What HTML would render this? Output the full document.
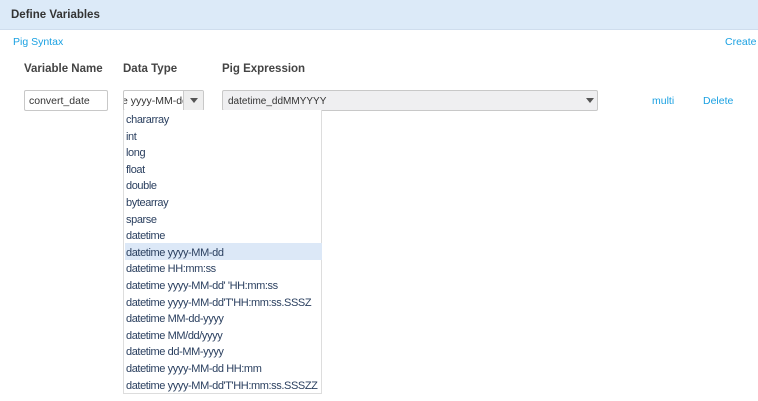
<!DOCTYPE html>
<html><head><style>
body{margin:0;width:758px;height:401px;background:#fff;font-family:"Liberation Sans",sans-serif;position:relative;overflow:hidden;color:#333}
.a{position:absolute;white-space:nowrap}
.hdr{left:0;top:0;width:758px;height:29px;background:#dceaf8;border-bottom:1px solid #cfdded}
.lnk{color:#1ba1e2;font-size:10.5px}
.lbl{font-size:11.5px;font-weight:bold;color:#444}
.box{border:1px solid #c8c8c8;border-radius:2px;box-sizing:border-box;font-size:10.5px;color:#333}
.list{left:123px;top:110px;width:199px;height:284px;border:1px solid #ddd;border-top:none;box-sizing:border-box;background:#fff}
.it{position:absolute;left:2px;font-size:11px;color:#2a3f5f;letter-spacing:-0.4px}
.tri{width:0;height:0;border-left:4px solid transparent;border-right:4px solid transparent;border-top:5px solid #555}
</style></head><body>
<div class="a hdr"></div>
<div class="a" style="left:11px;top:9px;font-size:11.5px;font-weight:bold;color:#333">Define Variables</div>
<div class="a lnk" style="left:13px;top:36px">Pig Syntax</div>
<div class="a lnk" style="left:725px;top:36px">Create</div>
<div class="a lbl" style="left:24px;top:63px">Variable Name</div>
<div class="a lbl" style="left:123px;top:63px">Data Type</div>
<div class="a lbl" style="left:222px;top:63px">Pig Expression</div>
<div class="a box" style="left:24px;top:90px;width:84px;height:21px;padding:4px 0 0 4px">convert_date</div>
<div class="a box" style="left:123px;top:90px;width:81px;height:21px;padding:4px 0 0 0;overflow:hidden;background:#fff">
<span style="margin-left:-2px">e yyyy-MM-dd</span><span style="position:absolute;left:59px;top:0;width:21px;height:19px;background:#eee;border-left:1px solid #ccc"></span><span class="a tri" style="left:66px;top:7px"></span></div>
<div class="a box" style="left:222px;top:90px;width:376px;height:21px;padding:5px 0 0 5px;background:#efeff1;font-size:10px">datetime_ddMMYYYY<span class="a tri" style="left:363px;top:7px"></span></div>
<div class="a lnk" style="left:652px;top:95px">multi</div>
<div class="a lnk" style="left:703px;top:95px">Delete</div>
<div class="a list">
<div class="a" style="left:1px;top:133px;width:197px;height:17px;background:#dce8f7"></div>
<div class="it" style="top:4px">chararray</div>
<div class="it" style="top:20.6px">int</div>
<div class="it" style="top:37.2px">long</div>
<div class="it" style="top:53.8px">float</div>
<div class="it" style="top:70.4px">double</div>
<div class="it" style="top:87px">bytearray</div>
<div class="it" style="top:103.6px">sparse</div>
<div class="it" style="top:120.2px">datetime</div>
<div class="it" style="top:136.8px">datetime yyyy-MM-dd</div>
<div class="it" style="top:153.4px">datetime HH:mm:ss</div>
<div class="it" style="top:170px">datetime yyyy-MM-dd' 'HH:mm:ss</div>
<div class="it" style="top:186.6px">datetime yyyy-MM-dd'T'HH:mm:ss.SSSZ</div>
<div class="it" style="top:203.2px">datetime MM-dd-yyyy</div>
<div class="it" style="top:219.8px">datetime MM/dd/yyyy</div>
<div class="it" style="top:236.4px">datetime dd-MM-yyyy</div>
<div class="it" style="top:253px">datetime yyyy-MM-dd HH:mm</div>
<div class="it" style="top:269.6px">datetime yyyy-MM-dd'T'HH:mm:ss.SSSZZ</div>
</div>
</body></html>
